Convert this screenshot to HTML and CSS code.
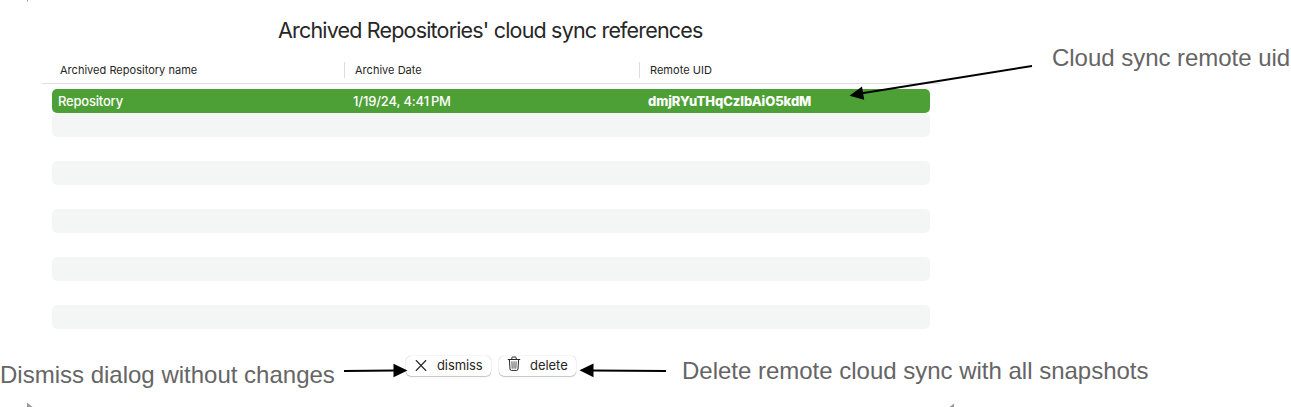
FILE: index.html
```html
<!DOCTYPE html>
<html lang="en">
<head>
<meta charset="utf-8">
<title>Archived Repositories</title>
<link rel="stylesheet" href="styles.css">
</head>
<body>
<main class="dialog">
  <h1 class="title">Archived Repositories' cloud sync references</h1>
  <div class="table">
    <div class="head">
      <div class="th">Archived Repository name</div>
      <div class="th">Archive Date</div>
      <div class="th">Remote UID</div>
    </div>
    <div class="rows">
      <div class="row selected">
        <div class="td td-name">Repository</div>
        <div class="td td-date">1/19/24, 4:41<span class="thin"></span>PM</div>
        <div class="td td-uid">dmjRYuTHqCzIbAiO5kdM</div>
      </div>
      <div class="row striped"></div>
      <div class="row"></div>
      <div class="row striped"></div>
      <div class="row"></div>
      <div class="row striped"></div>
      <div class="row"></div>
      <div class="row striped"></div>
      <div class="row"></div>
      <div class="row striped"></div>
    </div>
  </div>
  <div class="actions">
    <button class="btn dismiss" type="button">
      <svg width="12" height="14" viewBox="0 0 12 14"><path d="M1.2 1.500 10.8 11.500M10.8 1.500 1.2 11.500" fill="none" stroke="#262626" stroke-width="1.1" stroke-linecap="round"/></svg>
      <span>dismiss</span>
    </button>
    <button class="btn delete" type="button">
      <svg width="14" height="16" viewBox="0 0 14 16" fill="none" stroke="#262626" stroke-linecap="round" stroke-linejoin="round"><path d="M1.2 3.5H12.8M4.8 3.3V2Q4.8 1 5.8 1H8.2Q9.2 1 9.2 2V3.3M2.4 3.7 3 13Q3.1 14.4 4.4 14.4H9.6Q10.9 14.4 11 13L11.6 3.7"/><path d="M4.9 5.7 5.2 12.3M7 5.7V12.3M9.1 5.7 8.8 12.3" stroke-width=".8"/></svg>
      <span>delete</span>
    </button>
  </div>
</main>
<svg class="arrows" width="1291" height="407" viewBox="0 0 1291 407">
  <g stroke="#000" stroke-width="2" fill="none">
    <path d="M1032 66 862 93.2M344 371 395 370.5M666 371 592 370.5"/>
  </g>
  <path d="M849.500 95.7 862 86.5 864.2 99.8ZM407.500 370.500 393.500 363.700V377.300ZM579.500 370.300 593.500 363.500V377.200Z"/>
  <path d="M27 402.500V407H32.500ZM954 403.500V407H949.500ZM27 0H28V1.500H27Z" fill="#999"/>
</svg>
<p class="note note-uid">Cloud sync remote uid</p>
<p class="note note-dismiss">Dismiss dialog without changes</p>
<p class="note note-delete">Delete remote cloud sync with all snapshots</p>
</body>
</html>
```
FILE: styles.css
```css
* { box-sizing: border-box; }
body {
  margin: 0;
  height: 407px;
  position: relative;
  overflow: hidden;
  background: #fff;
  color: #262626;
  font-family: Inter, sans-serif;
}
.dialog { width: 898px; margin-left: 42px; padding-top: 16px; }
.title {
  margin: 0;
  height: 42px;
  padding-left: 236px;
  font-size: 21.5px;
  line-height: 28px;
  font-weight: 400;
  letter-spacing: -0.82px;
  white-space: nowrap;
}
.head {
  display: grid;
  grid-template-columns: 302px 295px 1fr;
  height: 26px;
  padding-top: 4px;
  border-bottom: 1px solid #e0e0e0;
}
.th {
  height: 16px;
  padding-left: 10px;
  border-left: 1px solid #dedede;
  font-size: 11px;
  line-height: 16px;
  letter-spacing: 0.02px;
}
.th:first-child { padding-left: 18px; border-left: 0; }
.rows { padding: 5px 10px 0; }
.row { height: 24px; border-radius: 5px; }
.striped { background: #f4f5f5; }
.selected {
  display: grid;
  grid-template-columns: 295px 295px 1fr;
  padding-left: 6px;
  background: #4da035;
  color: #fff;
  font-size: 13px;
  line-height: 24px;
  font-weight: 500;
  white-space: nowrap;
}
.td-name { letter-spacing: -0.2px; }
.td-date { letter-spacing: -0.15px; }
.thin { display: inline-block; width: 2px; }
.td-uid { font-weight: 800; letter-spacing: -0.08px; }
.actions { display: flex; gap: 8px; padding: 27px 0 0 364px; }
.btn {
  display: flex;
  align-items: center;
  height: 20px;
  padding: 0;
  border: 0;
  border-radius: 5px;
  background: #fff;
  box-shadow: 0 0 1px rgba(0,0,0,.35), 0 1px 1px rgba(0,0,0,.2);
  color: #262626;
  font: 400 13px/20px Inter, sans-serif;
}
.dismiss { width: 85px; padding-left: 9px; gap: 10px; letter-spacing: -0.1px; }
.delete { width: 77px; padding-left: 8px; gap: 9px; letter-spacing: -0.05px; }
.btn svg { flex: none; }
.btn span { margin-top: -2px; }
.delete svg { margin-top: -4px; }
.arrows { position: absolute; left: 0; top: 0; }
.note {
  position: absolute;
  margin: 0;
  color: #656565;
  font: 24px/28px "Liberation Sans", Arial, sans-serif;
  white-space: nowrap;
}
.note-uid { left: 1052px; top: 44px; letter-spacing: -0.03px; }
.note-dismiss { left: 0; top: 361px; }
.note-delete { left: 682px; top: 357px; letter-spacing: -0.01px; }
```
